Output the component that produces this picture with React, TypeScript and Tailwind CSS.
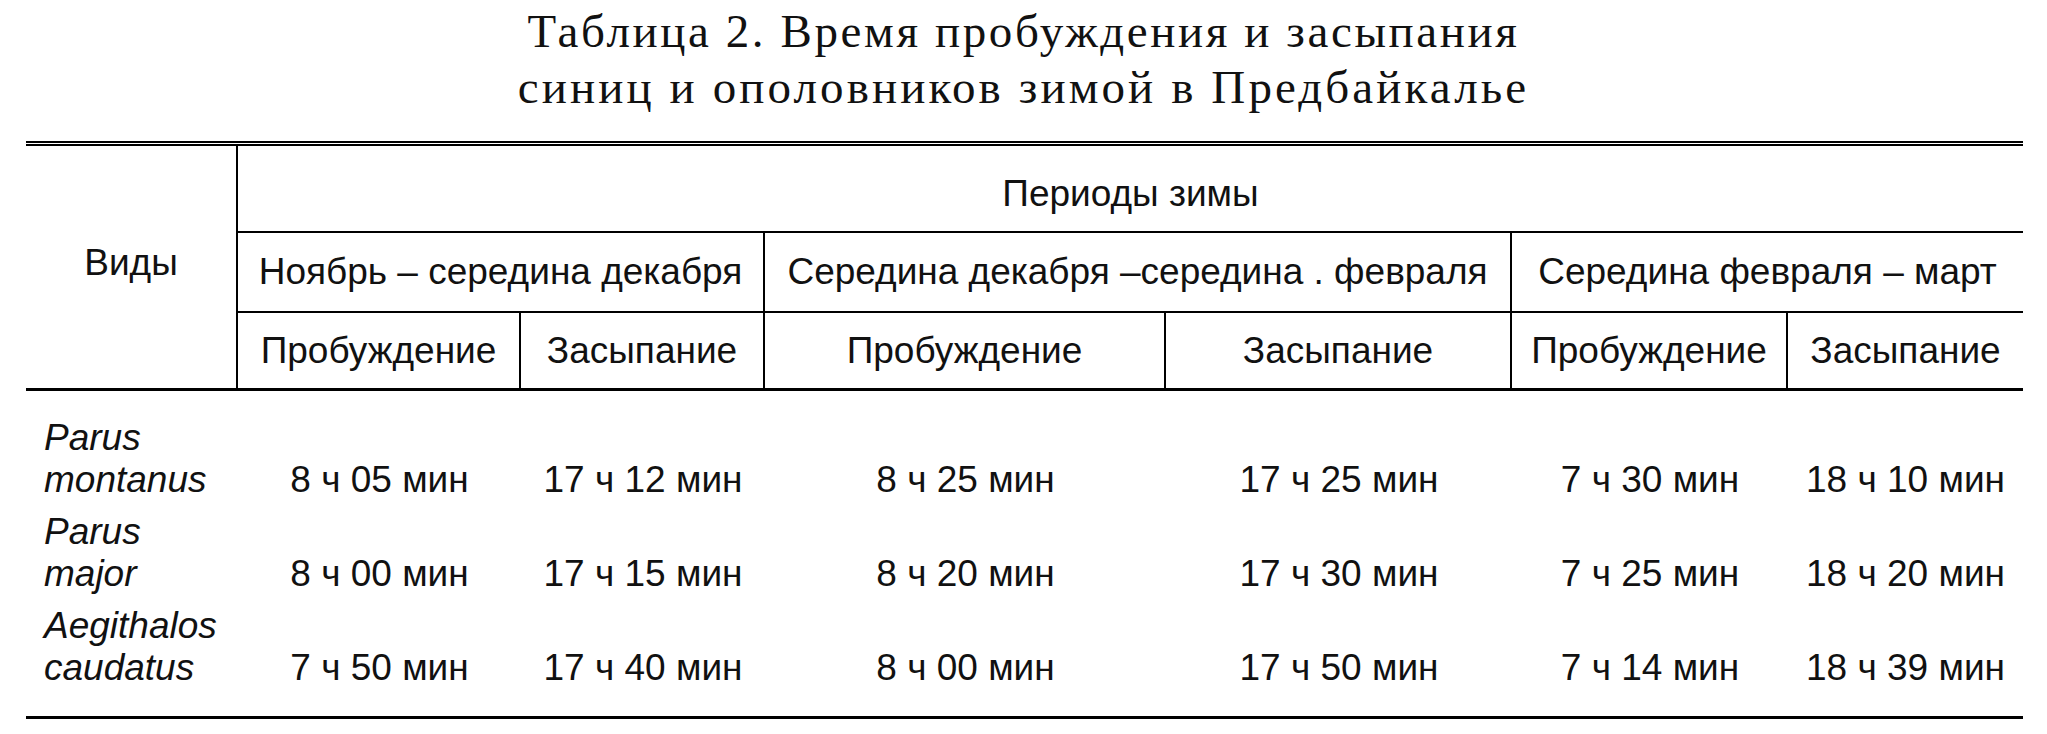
import React from "react";

const rows = [
  { a: "Parus", b: "montanus", v: ["8 ч 05 мин", "17 ч 12 мин", "8 ч 25 мин", "17 ч 25 мин", "7 ч 30 мин", "18 ч 10 мин"] },
  { a: "Parus", b: "major", v: ["8 ч 00 мин", "17 ч 15 мин", "8 ч 20 мин", "17 ч 30 мин", "7 ч 25 мин", "18 ч 20 мин"] },
  { a: "Aegithalos", b: "caudatus", v: ["7 ч 50 мин", "17 ч 40 мин", "8 ч 00 мин", "17 ч 50 мин", "7 ч 14 мин", "18 ч 39 мин"] },
];

const cols = "grid grid-cols-[212px_283px_244px_401px_346px_276px_235px]";

export default function App() {
  return (
    <div className="w-[2047px] h-[734px] bg-white text-black overflow-hidden">
      <div className="pt-[3px] text-center font-['Liberation_Serif',serif] text-[47px] leading-[56px] text-[#111]">
        <div className="tracking-[2.6px]">Таблица 2. Время пробуждения и засыпания</div>
        <div className="tracking-[3.1px]">синиц и ополовников зимой в Предбайкалье</div>
      </div>

      <div className="ml-[26px] w-[1997px] mt-[26px] font-['Liberation_Sans',Arial,sans-serif] text-[37px] leading-[42px] text-[#111]">
        <div className="h-[5px] border-t-2 border-b-2 border-black" />

        <div className="border-b-[3px] border-black">
          <div className={`${cols} grid-rows-[87px_80px_75px]`}>
            <div className="row-span-3 border-r-2 border-black flex items-center justify-center pb-[8px]">
              Виды
            </div>
            <div className="col-span-6 border-b-2 border-black flex items-center justify-center pt-[10px]">
              Периоды зимы
            </div>

            <div className="col-span-2 border-b-2 border-r-2 border-black flex items-center justify-center whitespace-nowrap">
              Ноябрь – середина декабря
            </div>
            <div className="col-span-2 border-b-2 border-r-2 border-black flex items-center justify-center whitespace-nowrap">
              Середина декабря –середина . февраля
            </div>
            <div className="col-span-2 border-b-2 border-black flex items-center justify-center whitespace-nowrap">
              Середина февраля – март
            </div>

            <div className="border-r-2 border-black flex items-center justify-center">Пробуждение</div>
            <div className="border-r-2 border-black flex items-center justify-center">Засыпание</div>
            <div className="border-r-2 border-black flex items-center justify-center">Пробуждение</div>
            <div className="border-r-2 border-black flex items-center justify-center">Засыпание</div>
            <div className="border-r-2 border-black flex items-center justify-center">Пробуждение</div>
            <div className="flex items-center justify-center">Засыпание</div>
          </div>
        </div>

        <div className={`${cols} pt-[21px] pb-[22px] border-b-[3px] border-black`}>
          {rows.map((r, i) => (
            <React.Fragment key={i}>
              <div className="pl-[18px] py-[5px] italic">
                <div>{r.a}</div>
                <div>{r.b}</div>
              </div>
              {r.v.map((t, j) => (
                <div key={j} className="py-[5px] flex items-end justify-center whitespace-nowrap">
                  {t}
                </div>
              ))}
            </React.Fragment>
          ))}
        </div>
      </div>
    </div>
  );
}
